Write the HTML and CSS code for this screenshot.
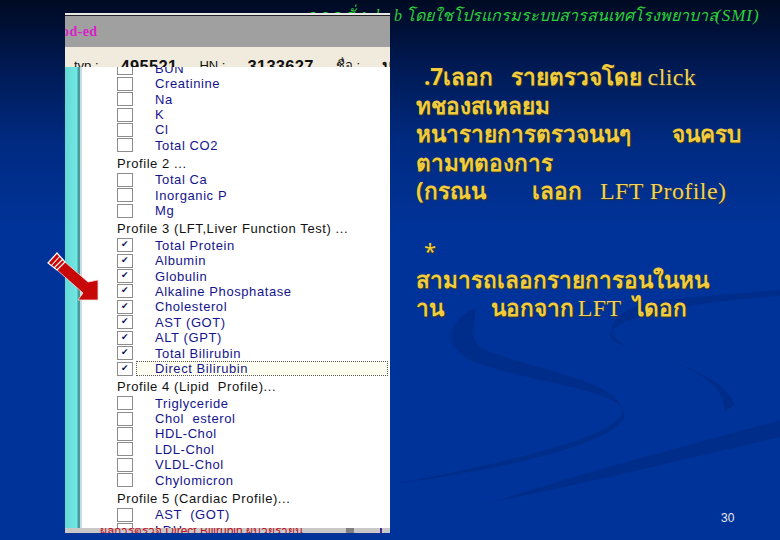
FILE: index.html
```html
<!DOCTYPE html>
<html lang="th">
<head>
<meta charset="utf-8">
<title>Lab</title>
<link rel="stylesheet" href="styles.css">
</head>
<body>
<div class="slide">
  <svg class="swoosh" width="780" height="540" viewBox="0 0 780 540">
    <path d="M392 484 C480 468 612 440 622 414 C630 392 540 384 480 364 C445 352 440 325 475 308 C478 325 462 340 490 352 C550 374 626 382 624 418 C612 446 480 474 392 484 Z"/>
    <path d="M780 296 C720 300 612 312 610 336 C612 352 720 362 735 405 L724 412 C726 382 690 366 640 352 C600 340 600 312 660 300 L780 290 Z"/>
    <path d="M780 420 L780 437 C680 460 560 490 470 506 L500 500 C590 470 690 445 780 420 Z"/>
  </svg>
  <div class="title"><span class="title-hidden">การสั่ง lab</span><span class="title-main">โดยใชโปรแกรมระบบสารสนเทศโรงพยาบาล</span><span class="title-smi">(SMI)</span></div>
  <div class="window">
    <div class="win-rule"></div>
    <div class="win-head"><span class="brand">od-ed</span></div>
    <div class="win-info"><span>typ :</span><b>495521</b><span>HN :</span><b>3133627</b><span>ชื่อ :</span><b>นาย</b></div>
    <div class="win-body">
      <div class="side"></div>
      <div class="list-clip">
        <div class="list">
          <div class="item"><i class="box"></i><span>BUN</span></div>
          <div class="item"><i class="box"></i><span>Creatinine</span></div>
          <div class="item"><i class="box"></i><span>Na</span></div>
          <div class="item"><i class="box"></i><span>K</span></div>
          <div class="item"><i class="box"></i><span>Cl</span></div>
          <div class="item"><i class="box"></i><span>Total CO2</span></div>
          <div class="head">Profile 2 ...</div>
          <div class="item"><i class="box"></i><span>Total Ca</span></div>
          <div class="item"><i class="box"></i><span>Inorganic P</span></div>
          <div class="item"><i class="box"></i><span>Mg</span></div>
          <div class="head">Profile 3 (LFT,Liver Function Test) ...</div>
          <div class="item"><i class="box on">✔</i><span>Total Protein</span></div>
          <div class="item"><i class="box on">✔</i><span>Albumin</span></div>
          <div class="item"><i class="box on">✔</i><span>Globulin</span></div>
          <div class="item"><i class="box on">✔</i><span>Alkaline Phosphatase</span></div>
          <div class="item"><i class="box on">✔</i><span>Cholesterol</span></div>
          <div class="item"><i class="box on">✔</i><span>AST (GOT)</span></div>
          <div class="item"><i class="box on">✔</i><span>ALT (GPT)</span></div>
          <div class="item"><i class="box on">✔</i><span>Total Bilirubin</span></div>
          <div class="item"><i class="box on">✔</i><span class="focus">Direct Bilirubin</span></div>
          <div class="head">Profile 4 (Lipid  Profile)...</div>
          <div class="item"><i class="box"></i><span>Triglyceride</span></div>
          <div class="item"><i class="box"></i><span>Chol  esterol</span></div>
          <div class="item"><i class="box"></i><span>HDL-Chol</span></div>
          <div class="item"><i class="box"></i><span>LDL-Chol</span></div>
          <div class="item"><i class="box"></i><span>VLDL-Chol</span></div>
          <div class="item"><i class="box"></i><span>Chylomicron</span></div>
          <div class="head">Profile 5 (Cardiac Profile)...</div>
          <div class="item"><i class="box"></i><span>AST  (GOT)</span></div>
          <div class="item"><i class="box"></i><span>LDH</span></div>
        </div>
      </div>
    </div>
    <div class="win-foot"><span class="foot-text">ผลการตรวจ Direct Bilirubin ผู้ป่วยรายนี้</span><i class="foot-thumb"></i><i class="foot-tick"></i></div>
  </div>
  <div class="notes">
    <p class="line first">.7เลอก   รายตรวจโดย <em>click</em></p>
    <p class="line">ทชองสเหลยม</p>
    <p class="line">หนารายการตรวจนนๆ       จนครบ</p>
    <p class="line">ตามทตองการ</p>
    <p class="line">(กรณน        เลอก   <em>LFT Profile)</em></p>
    <p class="line star">*</p>
    <p class="line">สามารถเลอกรายการอนในหน</p>
    <p class="line">าน        นอกจาก<em class="lft">LFT</em> ไดอก</p>
  </div>
  <svg class="arrow" width="56" height="52" viewBox="0 0 56 52">
    <path d="M20 12 L43 32 L53 30 L53 50 L33 50 L38 43 L12 20 Z" fill="#c80808" stroke="#f0dede" stroke-width="0.8"/>
    <path d="M3 13 L12 3 L20 12 L12 20 Z" fill="#c80808" stroke="#fff" stroke-width="1.2"/>
    <path d="M6 16 L15 6 M9 18 L18 9" stroke="#fff" stroke-width="1.1"/>
  </svg>
  <div class="page">30</div>
</div>
</body>
</html>
```
FILE: styles.css
```css
html, body { margin: 0; padding: 0; }
body { width: 780px; height: 540px; overflow: hidden; }
.slide {
  position: relative;
  width: 780px;
  height: 540px;
  box-sizing: border-box;
  padding: 13px 0 0 65px;
  display: flex;
  background: linear-gradient(180deg, #000a22 0, #001a55 70px, #002a80 140px, #003399 230px, #003399 100%);
  overflow: hidden;
}
.swoosh { position: absolute; left: 0; top: 0; }
.swoosh path { fill: #002d8a; }
.title {
  position: absolute;
  left: 306px;
  top: 3px;
  display: flex;
  align-items: baseline;
  white-space: nowrap;
  font: italic 16px "Liberation Serif", "Noto Sans", "DejaVu Sans", serif;
  color: #2fd03a;
}
.title-hidden { width: 100px; letter-spacing: 3.2px; flex: none; }
.title-smi { font-size: 17px; letter-spacing: 1px; margin-left: -3px; }
.window {
  position: relative;
  width: 325px;
  height: 520px;
  display: flex;
  flex-direction: column;
  flex: none;
  background: #fff;
}
.win-rule { height: 3px; background: #e8e8e8; border-bottom: 1px solid #222; box-sizing: border-box; }
.win-head {
  height: 31px;
  background: #a0a0a0;
  display: flex;
  align-items: center;
  flex: none;
  overflow: hidden;
}
.brand { font: bold 14px "Liberation Serif", serif; letter-spacing: 0.4px; color: #d81fc8; margin-left: -3px; }
.win-info {
  height: 20px;
  flex: none;
  background: #f0ebdd;
  display: flex;
  gap: 22px;
  padding: 9px 0 0 9px;
  box-sizing: border-box;
  overflow: hidden;
  white-space: nowrap;
  font: 13px/20px "Liberation Sans", "Noto Sans", sans-serif;
  color: #111;
}
.win-info b { font-size: 16.5px; letter-spacing: 0.3px; }
.win-body { flex: 1; display: flex; min-height: 0; }
.side {
  width: 17px;
  flex: none;
  background: linear-gradient(90deg, #66d8d4 0, #70e8e4 12px, #4a9a9c 13px, #4a9a9c 15px, #c8dde2 15px, #c8dde2 100%);
}
.list-clip { flex: 1; overflow: hidden; min-width: 0; }
.list {
  margin-top: -6.5px;
  padding-left: 35px;
  font: 13px "Liberation Sans", sans-serif;
  letter-spacing: 0.58px;
}
.item {
  display: flex;
  align-items: center;
  height: 15.45px;
  gap: 22px;
  color: #14148c;
  white-space: pre;
}
.head {
  height: 19px;
  line-height: 21px;
  color: #111;
  white-space: pre;
}
.box {
  box-sizing: border-box;
  width: 16px;
  height: 14px;
  flex: none;
  border: 1px solid #8c8c8c;
  background: #fff;
  font: normal 9px/10px "DejaVu Sans", sans-serif;
  text-align: center;
  color: #10105a;
}
.focus {
  flex: 1;
  border: 1px dotted #555;
  background: #fffff2;
  margin-left: -19px;
  margin-right: 2px;
  padding-left: 18px;
  height: 13px;
  line-height: 13px;
}
.win-foot {
  position: relative;
  height: 5px;
  margin-top: -5px;
  flex: none;
  background: #c8c8c8;
  overflow: hidden;
  display: flex;
  align-items: center;
  padding-left: 35px;
  font: 12px "Liberation Sans", "Noto Sans", sans-serif;
  color: #c01020;
  white-space: nowrap;
}
.foot-thumb { width: 8px; height: 5px; background: #808080; flex: none; margin-left: 43px; }
.foot-tick { width: 2px; height: 5px; background: #4a2a90; flex: none; margin-left: 26px; }
.notes {
  position: relative;
  margin: 50px 0 0 26px;
  width: 345px;
  font: bold 22.5px/28.5px "Noto Sans", "DejaVu Sans", sans-serif;
  color: #f2cc3e;
  text-shadow: 1px 1px 1px #3a3a20;
}
.notes em { font: normal 24px "Liberation Serif", serif; letter-spacing: 0.4px; color: #f0d060; }
.notes .lft { margin: 0 5px 0 4px; }
.line { margin: 0; height: 28.5px; white-space: pre; }
.first { text-indent: 8px; }
.star { margin-top: 26px; height: 34px; padding-top: 4px; box-sizing: border-box; text-indent: 8px; font-size: 22px; font-weight: normal; }
.arrow { position: absolute; left: 45px; top: 250px; }
.page {
  position: absolute;
  left: 721px;
  top: 511px;
  font: 12px "Liberation Sans", sans-serif;
  color: #e8e8f0;
}
```
